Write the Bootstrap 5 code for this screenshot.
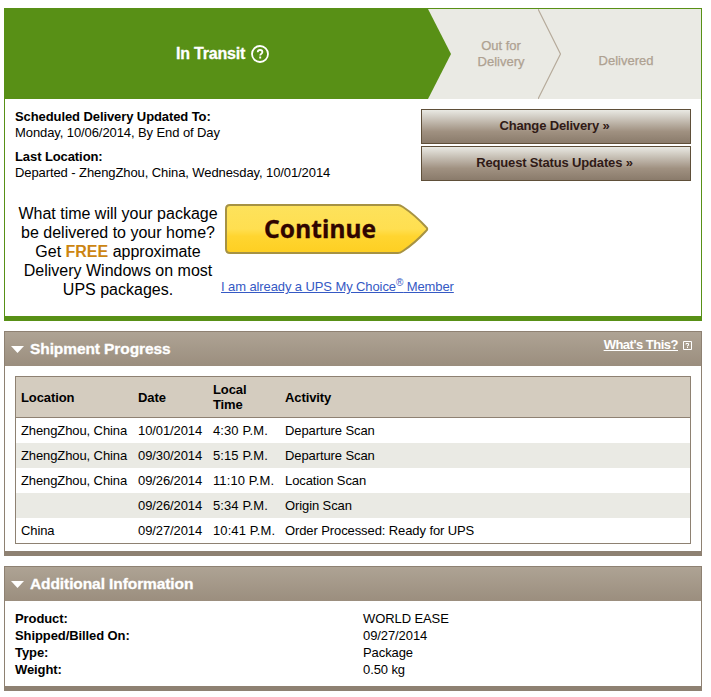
<!DOCTYPE html>
<html lang="en">
<head>
  <meta charset="UTF-8"/>
  <meta name="viewport" content="width=device-width, initial-scale=1.0"/>
  <title>Tracking Detail</title>
  <!-- Bootstrap CSS -->
  <link
    rel="stylesheet"
    href="https://cdn.jsdelivr.net/npm/bootstrap@5.3.0/dist/css/bootstrap.min.css"
  />
  <style>
    body {
      font-family: "Liberation Sans", Arial, sans-serif;
      font-size: 13px;
      line-height: 16px;
      letter-spacing: -.09px;
      color: #000;
    }
    .tracking-page {
      width: 698px;
      margin: 8px 0 0 4px;
      gap: 10px;
    }
    .panel {
      --bs-card-border-radius: 0;
      --bs-card-border-color: #8e8172;
      --bs-card-color: #000;
      border-bottom-width: 5px;
    }
    .panel-status {
      --bs-card-border-color: #589016;
      height: 313px;
    }
    .panel-progress { height: 225px; }
    .panel-info { height: 125px; }

    /* delivery steps */
    .steps {
      height: 90px;
      background: #eaeae4;
      color: #aea191;
      font-size: 13px;
      letter-spacing: 0;
      -webkit-text-stroke: .25px #aea191;
    }
    .step-current {
      width: 446px;
      padding-right: 11px;
      gap: 6px;
      background: #589016;
      color: #fff;
      font-size: 16px;
      letter-spacing: -.2px;
      -webkit-text-stroke: .3px #fff;
      clip-path: polygon(0 0, 423px 0, 100% 50%, 423px 100%, 0 100%);
    }
    .step-next {
      width: 87px;
      padding-left: 13px;
    }
    .step-last { padding: 13px 10px 0 0; }

    /* status body */
    .status-body { padding: 10px 10px 0; }
    .status-actions { width: 270px; gap: 2px; }
    .btn-action {
      height: 35px;
      padding: 0 3px 1px 0;
      border: 1px solid #5f4f39;
      border-radius: 0;
      background: linear-gradient(#e9e9e3 0%, #a09181 65%, #8a7b6b 100%);
      color: #301a16;
      font-size: 13px;
      font-weight: bold;
      line-height: 16px;
      letter-spacing: -.16px;
    }
    .promo { margin-top: 23px; padding: 0 10px; }
    .promo-text {
      width: 206px;
      font-size: 16px;
      line-height: 19px;
      letter-spacing: 0;
    }
    .promo-free { color: #cc8512; }
    .promo-action { padding-left: 4px; }
    .promo-link {
      margin: 24px 0 0 -4px;
      color: #3559c4;
      line-height: 18px;
      letter-spacing: -.1px;
    }
    .promo-link sup { font-size: 10px; top: -5px; }

    /* section headings */
    .panel-head {
      height: 34px;
      padding: 0 9px 0 6px;
      background: linear-gradient(#aea394, #9b8e7e);
      color: #fff;
    }
    .panel-head h2 {
      margin-left: 6px;
      font-size: 15.5px;
      font-weight: bold;
      line-height: 18px;
      -webkit-text-stroke: .3px #fff;
    }
    .whats-this { gap: 5px; padding-bottom: 8px; }
    .whats-this a { letter-spacing: -.5px; }

    /* scans */
    .scan-wrap { padding: 10px 10px 0; }
    .scan-table {
      --bs-table-color: #000;
      border: 1px solid #8e8172;
      border-collapse: separate;
      border-spacing: 0;
      table-layout: fixed;
      letter-spacing: -.1px;
    }
    .scan-table > * > tr > * {
      height: 25px;
      padding: 0 5px;
      border: 0;
      line-height: 15px;
      vertical-align: middle;
      white-space: nowrap;
    }
    .scan-table > thead > tr > th {
      height: 41px;
      background: #d4ccbf;
      border-bottom: 1px solid #8e8172;
      white-space: normal;
    }
    .scan-table > tbody > tr:nth-child(even) > td { background: #eaeae4; }
    .scan-table td:nth-child(3) { letter-spacing: .1px; }
    .col-location { width: 117px; }
    .col-date { width: 75px; }
    .col-time { width: 72px; }

    .info-list { padding: 9px 10px 0; line-height: 17px; }
    .info-list dt { width: 348px; }
    .info-list dd { width: 320px; }
  </style>
</head>
<body>
  <main class="tracking-page d-flex flex-column">

    <!-- Status -->
    <section class="card panel panel-status">
      <div class="steps d-flex text-center">
        <div class="step-current d-flex align-items-center justify-content-center fw-bold">
          <span>In Transit</span>
          <svg width="18" height="18" viewBox="0 0 18 18" fill="none" stroke="#fff">
            <circle cx="9" cy="9" r="8" stroke-width="1.8"/>
            <path d="M6.7 7.2C6.8 5.7 7.7 5 9 5c1.4 0 2.4.8 2.4 2.1 0 1.6-2.2 1.6-2.2 3.4" stroke-width="1.8"/>
            <path d="M9.2 11.6v1.9" stroke-width="1.9"/>
          </svg>
        </div>
        <div class="step-next d-flex align-items-center justify-content-center">Out for<br>Delivery</div>
        <svg width="23" height="90" fill="none" stroke="#b5a999" stroke-width="1.2">
          <path d="M0 0L22.5 45L0 90"/>
        </svg>
        <div class="step-last flex-grow-1 d-flex align-items-center justify-content-center">Delivered</div>
      </div>

      <div class="status-body d-flex justify-content-between">
        <div>
          <p class="mb-2"><strong>Scheduled Delivery Updated To:</strong><br>Monday, 10/06/2014, By End of Day</p>
          <p class="mb-0"><strong>Last Location:</strong><br>Departed - ZhengZhou, China, Wednesday, 10/01/2014</p>
        </div>
        <div class="status-actions d-flex flex-column">
          <button type="button" class="btn btn-action">Change Delivery »</button>
          <button type="button" class="btn btn-action">Request Status Updates »</button>
        </div>
      </div>

      <div class="promo d-flex">
        <p class="promo-text mb-0 text-center">
          What time will your package<br>be delivered to your home?<br>Get <strong class="promo-free">FREE</strong> approximate<br>Delivery Windows on most<br>UPS packages.
        </p>
        <div class="promo-action d-flex flex-column">
          <svg width="204" height="50" viewBox="0 0 204 50" role="button">
            <defs>
              <linearGradient id="gold" x1="0" y1="0" x2="0" y2="1">
                <stop offset="0" stop-color="#fde25c"/>
                <stop offset=".5" stop-color="#ffdf50"/>
                <stop offset=".65" stop-color="#ffd530"/>
                <stop offset="1" stop-color="#fecf22"/>
              </linearGradient>
            </defs>
            <path d="M5 1H173Q175 1 178 3Q190 11 201 23Q203.500 25 201 27Q190 39 178 47Q175 49 173 49H5Q1 49 1 45V5Q1 1 5 1Z" fill="url(#gold)" stroke="#a69243" stroke-width="2"/>
            <text x="39" y="34" textLength="112" font-family="Noto Sans, sans-serif" font-size="24.5" font-weight="700" fill="#300500" stroke="#300500" stroke-width=".3">Continue</text>
          </svg>
          <a href="#" class="promo-link">I am already a UPS My Choice<sup>®</sup> Member</a>
        </div>
      </div>
    </section>

    <!-- Shipment progress -->
    <section class="card panel panel-progress">
      <div class="panel-head d-flex flex-shrink-0 align-items-center justify-content-between">
        <div class="d-flex align-items-center">
          <svg width="13" height="7"><path d="M0 0H13L6.5 7Z" fill="#fff"/></svg>
          <h2 class="mb-0">Shipment Progress</h2>
        </div>
        <div class="whats-this d-flex align-items-center">
          <a href="#" class="text-white fw-bold">What's This?</a>
          <svg width="9" height="9" fill="none" stroke="#fff">
            <path d="M.5.5H8.5V8.5H.5ZM3 3.5V2.5H5.5V4.5H4.5V5.5M4 6.5H5"/>
          </svg>
        </div>
      </div>
      <div class="scan-wrap">
        <table class="table scan-table mb-0">
          <thead>
            <tr>
              <th class="col-location">Location</th>
              <th class="col-date">Date</th>
              <th class="col-time">Local<br>Time</th>
              <th>Activity</th>
            </tr>
          </thead>
          <tbody>
            <tr><td>ZhengZhou, China</td><td>10/01/2014</td><td>4:30 P.M.</td><td>Departure Scan</td></tr>
            <tr><td>ZhengZhou, China</td><td>09/30/2014</td><td>5:15 P.M.</td><td>Departure Scan</td></tr>
            <tr><td>ZhengZhou, China</td><td>09/26/2014</td><td>11:10 P.M.</td><td>Location Scan</td></tr>
            <tr><td></td><td>09/26/2014</td><td>5:34 P.M.</td><td>Origin Scan</td></tr>
            <tr><td>China</td><td>09/27/2014</td><td>10:41 P.M.</td><td>Order Processed: Ready for UPS</td></tr>
          </tbody>
        </table>
      </div>
    </section>

    <!-- Additional information -->
    <section class="card panel panel-info">
      <div class="panel-head d-flex flex-shrink-0 align-items-center">
        <svg width="13" height="7"><path d="M0 0H13L6.5 7Z" fill="#fff"/></svg>
        <h2 class="mb-0">Additional Information</h2>
      </div>
      <dl class="info-list d-flex flex-wrap mb-0">
        <dt>Product:</dt><dd class="mb-0">WORLD EASE</dd>
        <dt>Shipped/Billed On:</dt><dd class="mb-0">09/27/2014</dd>
        <dt>Type:</dt><dd class="mb-0">Package</dd>
        <dt>Weight:</dt><dd class="mb-0">0.50 kg</dd>
      </dl>
    </section>

  </main>

  <script
    src="https://cdn.jsdelivr.net/npm/bootstrap@5.3.0/dist/js/bootstrap.bundle.min.js">
  </script>
</body>
</html>
